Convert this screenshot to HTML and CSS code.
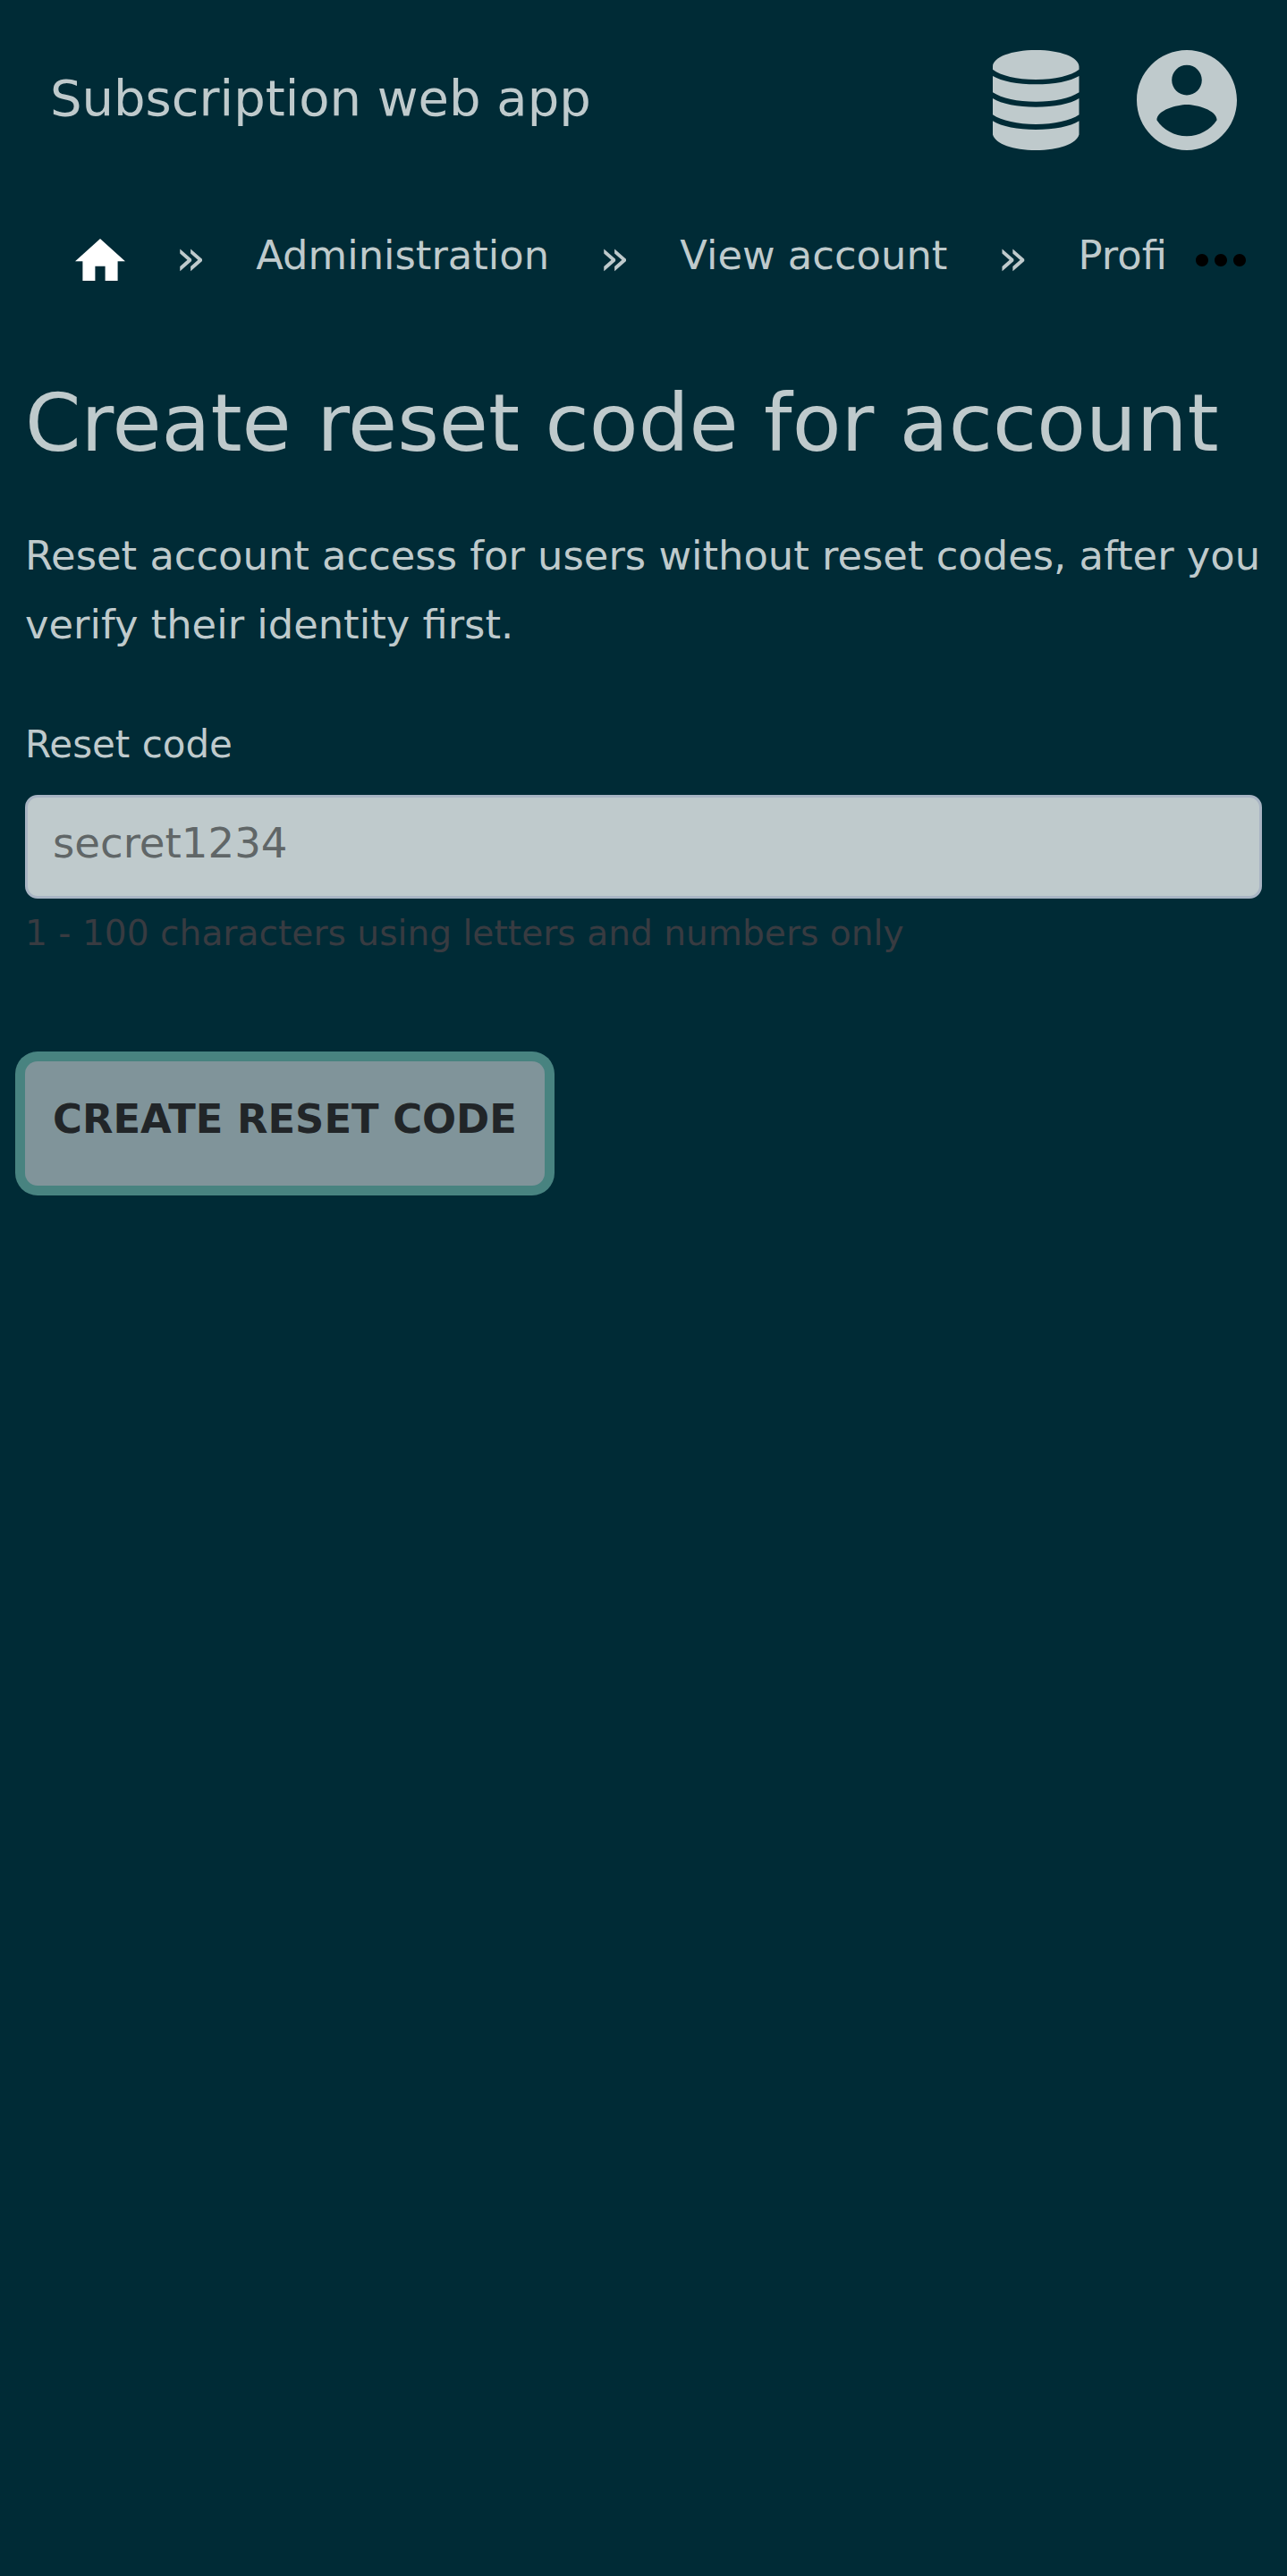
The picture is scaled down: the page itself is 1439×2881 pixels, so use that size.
FILE: index.html
```html
<!DOCTYPE html>
<html lang="en">
<head>
<meta charset="utf-8">
<title>Subscription web app</title>
<link rel="stylesheet" href="styles.css">
</head>
<body>
<header class="topbar">
  <a class="brand">Subscription web app</a>
  <div class="actions">
    <svg class="icon-db" viewBox="0 0 97 112" preserveAspectRatio="none"><path d="M0 18.5C0 8 21 0 48.500 0S97 8 97 18.500V21.700C88 28.500 70 33 48.500 33S9 28.500 0 21.700zM0 29C10 35 28 38.300 48.500 38.300S87 35 97 29V47.300C87 54 69 57.700 48.500 57.700S10 54 0 47.300zM0 54C10 60.200 28 63.700 48.500 63.700S87 60.200 97 54V72.300C87 79 69 83 48.500 83S10 79 0 72.300zM0 79.300C10 85.500 28 89 48.500 89S87 85.500 97 79.300V94.500C94 105 74 112 48.500 112S3 105 0 94.500z"/></svg>
    <svg class="icon-user" viewBox="2 2 20 20"><path d="M12 2C6.480 2 2 6.480 2 12s4.480 10 10 10 10-4.480 10-10S17.520 2 12 2zm0 3c1.660 0 3 1.340 3 3s-1.340 3-3 3-3-1.340-3-3 1.340-3 3-3zm0 14.200c-2.500 0-4.710-1.280-6-3.220.03-1.990 4-3.080 6-3.080 1.990 0 5.970 1.090 6 3.080-1.290 1.940-3.500 3.220-6 3.220z"/></svg>
  </div>
</header>
<nav class="crumbs">
  <div class="trail">
    <svg class="icon-home" viewBox="2 3 20 17"><path d="M10 20v-6h4v6h5v-8h3L12 3 2 12h3v8z"/></svg>
    <span class="sep">»</span>
    <a class="crumb">Administration</a>
    <span class="sep">»</span>
    <a class="crumb">View account</a>
    <span class="sep">»</span>
    <a class="crumb">Profile</a>
  </div>
  <svg class="icon-more" viewBox="0 0 24 24"><path d="M6 10c-1.100 0-2 .9-2 2s.9 2 2 2 2-.9 2-2-.9-2-2-2zm12 0c-1.100 0-2 .9-2 2s.9 2 2 2 2-.9 2-2-.9-2-2-2zm-6 0c-1.100 0-2 .9-2 2s.9 2 2 2 2-.9 2-2-.9-2-2-2z"/></svg>
</nav>
<main class="content">
  <h1 class="title">Create reset code for account</h1>
  <p class="intro">Reset account access for users without reset codes, after you verify their identity first.</p>
  <form>
    <label class="label" for="code">Reset code</label>
    <input class="field" id="code" type="text" placeholder="secret1234">
    <div class="hint">1 - 100 characters using letters and numbers only</div>
    <button class="submit" type="button">CREATE RESET CODE</button>
  </form>
</main>
</body>
</html>
```
FILE: styles.css
```css
* { box-sizing: border-box; }
body {
  margin: 0;
  min-height: 2881px;
  background: #002b36;
  color: #bfcacc;
  font-family: "DejaVu Sans", sans-serif;
  font-size: 44.8px;
}
svg { display: block; flex: none; fill: currentColor; }
.topbar {
  display: flex;
  align-items: center;
  justify-content: space-between;
  height: 224px;
  padding: 0 56.5px 0 56px;
}
.brand { font-size: 56px; line-height: 84px; margin-top: -4px; }
.actions { display: flex; gap: 64px; }
.icon-db { width: 96.5px; height: 112px; }
.icon-user { width: 112px; height: 112px; }
.crumbs {
  display: flex;
  align-items: center;
  height: 133px;
  padding: 0 32px 0 84px;
}
.trail {
  display: flex;
  align-items: center;
  flex: none;
  width: 1224px;
  height: 100px;
  overflow: hidden;
  white-space: nowrap;
}
.icon-home { width: 56px; height: 47.6px; color: #fff; }
.sep { flex: none; margin: -5px 56px 0; font-size: 56px; line-height: 70px; }
.crumb { flex: none; line-height: 70px; margin-top: -9px; }
.icon-more { width: 84px; height: 84px; margin-left: 15px; color: #000; }
.content { padding: 0 28px; }
.title {
  margin: 53px 0 47px;
  font-size: 89.6px;
  font-weight: 400;
  line-height: 126px;
  white-space: nowrap;
}
.intro { margin: 0; line-height: 77px; }
.label { display: block; margin-top: 64px; font-size: 42px; line-height: 63px; }
.field {
  display: block;
  width: 100%;
  height: 115.5px;
  margin-top: 25px;
  padding: 0 28px 8px;
  border: 3.5px solid #a8b4c3;
  border-radius: 14px;
  background: #bfcacc;
  font-family: inherit;
  font-size: 46.67px;
}
.field::placeholder { color: #606667; opacity: 1; }
.hint { margin-top: 9px; font-size: 39.15px; line-height: 59px; color: #383b41; }
.submit {
  display: block;
  width: 581px;
  height: 139.5px;
  margin-top: 114px;
  padding: 0 0 9px;
  border: 0;
  border-radius: 14px;
  background: #80949a;
  box-shadow: 0 0 0 11px #488380;
  color: #212528;
  font-family: inherit;
  font-size: 44.8px;
  font-weight: 700;
}
```
